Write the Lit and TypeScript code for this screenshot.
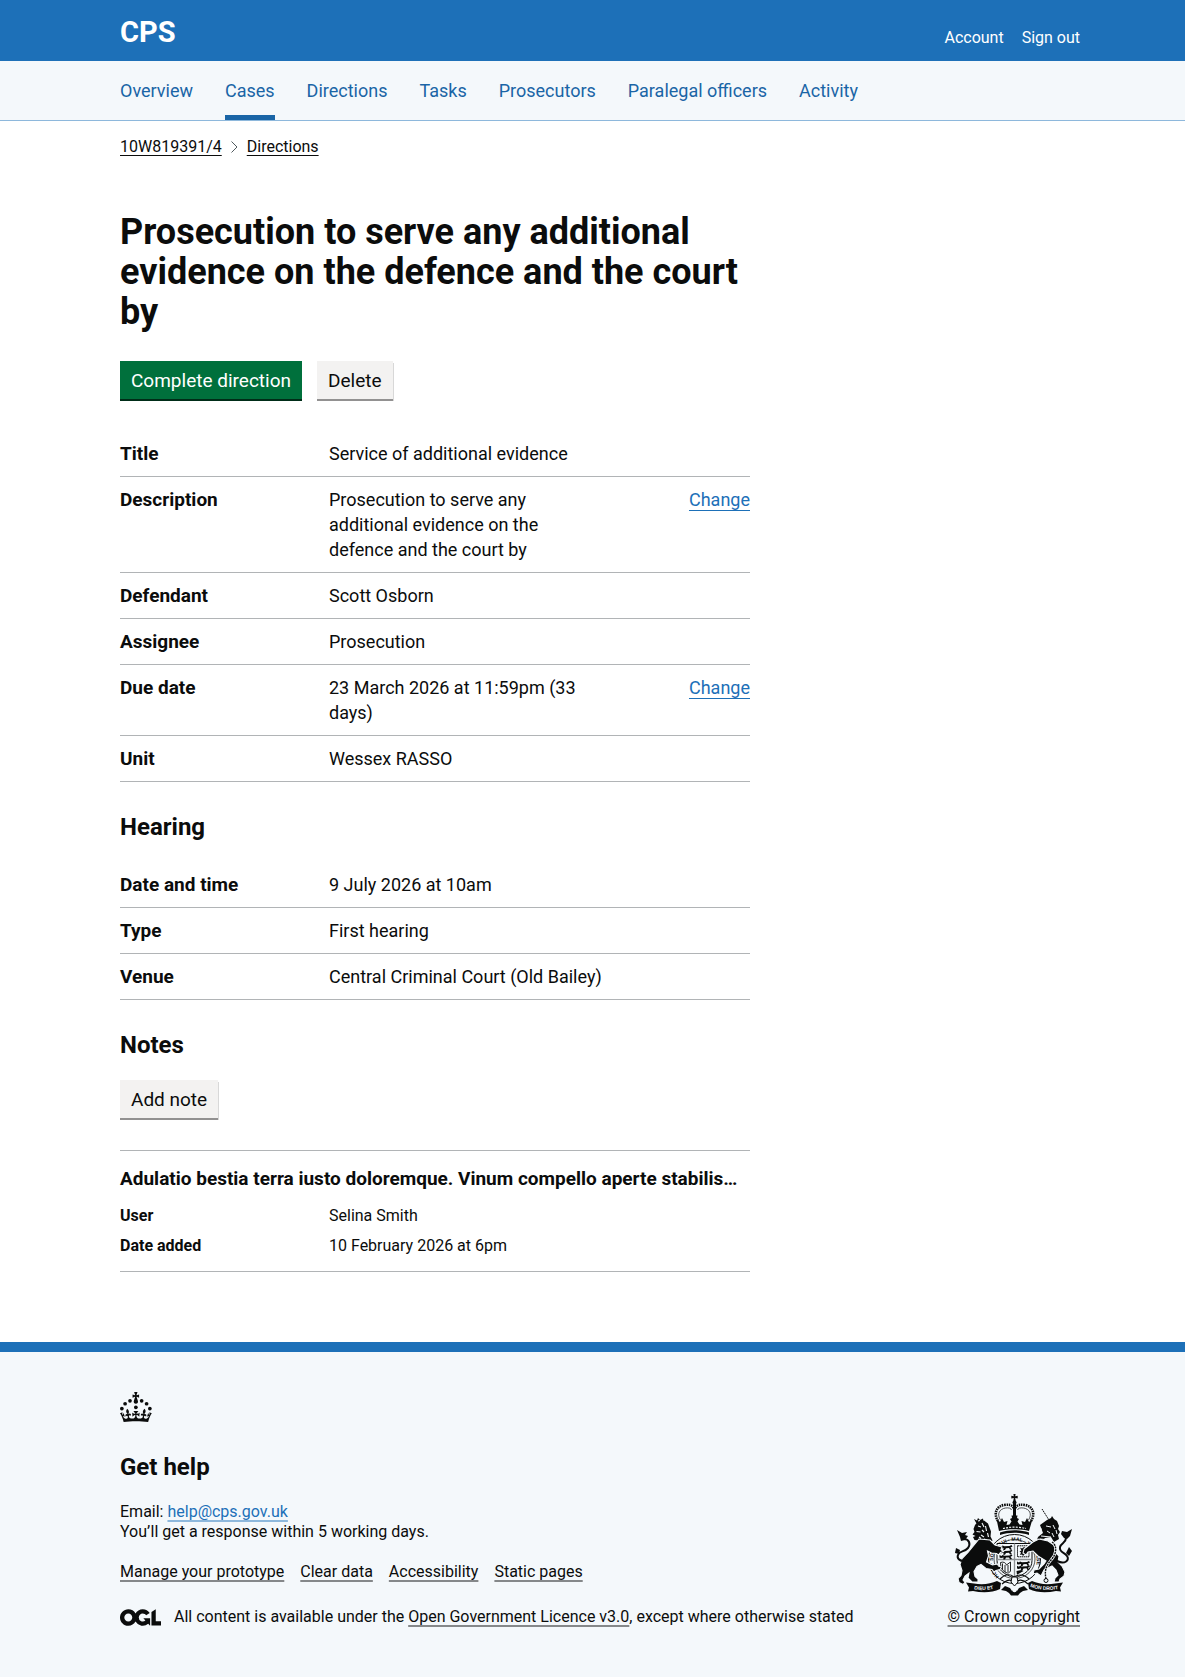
import { LitElement, html, css, svg, nothing } from 'lit';
import { customElement } from 'lit/decorators.js';
import { classMap } from 'lit/directives/class-map.js';

interface SummaryRow {
  key: string;
  value: string;
  change?: boolean;
}

const navigation = ['Overview', 'Cases', 'Directions', 'Tasks', 'Prosecutors', 'Paralegal officers', 'Activity'];

const direction: SummaryRow[] = [
  { key: 'Title', value: 'Service of additional evidence' },
  { key: 'Description', value: 'Prosecution to serve any additional evidence on the defence and the court by', change: true },
  { key: 'Defendant', value: 'Scott Osborn' },
  { key: 'Assignee', value: 'Prosecution' },
  { key: 'Due date', value: '23 March 2026 at 11:59pm (33 days)', change: true },
  { key: 'Unit', value: 'Wessex RASSO' },
];

const hearing: SummaryRow[] = [
  { key: 'Date and time', value: '9 July 2026 at 10am' },
  { key: 'Type', value: 'First hearing' },
  { key: 'Venue', value: 'Central Criminal Court (Old Bailey)' },
];

const footerLinks = ['Manage your prototype', 'Clear data', 'Accessibility', 'Static pages'];

const crown = html`<svg class="crown" viewBox="0 0 64 60" aria-hidden="true" fill="currentColor">
  <circle cx="20" cy="17.6" r="3.7" /><circle cx="10.2" cy="23.5" r="3.7" /><circle cx="3.7" cy="33.2" r="3.7" />
  <circle cx="31.7" cy="30.6" r="3.7" /><circle cx="43.3" cy="17.6" r="3.7" /><circle cx="53.2" cy="23.5" r="3.7" />
  <circle cx="59.7" cy="33.2" r="3.7" />
  <path d="M33.1,9.8c.2-.1.3-.3.5-.5l4.6,2.4v-6.8l-4.6,1.5c-.1-.2-.3-.3-.5-.5l1.9-5.9h-6.7l1.9,5.9c-.2.1-.3.3-.5.5l-4.6-1.5v6.8l4.6-2.4c.1.2.3.3.5.5l-2.6,8c-.9,2.8,1.2,5.7,4.1,5.7h0c3,0,5.1-2.9,4.1-5.7l-2.6-8ZM37,37.9s-3.4,3.8-4.1,6.1c2.2,0,4.2-.5,6.4-2.8l-.7,8.5c-2-2.8-4.4-4.1-5.7-3.8.1,3.1.5,6.7,5.8,7.2,3.7.3,6.7-1.5,7-3.8.4-2.6-2-4.3-3.7-1.6-1.4-4.5,2.4-6.1,4.9-3.2-1.9-4.5-1.8-7.7,2.4-10.9,3,4,2.6,7.3-1.2,11.1,2.4-1.3,6.2,0,4,4.6-1.2-2.8-3.7-2.2-4.2.2-.3,1.7.7,3.7,3,4.2,1.9.3,4.7-.9,7-5.9-1.3,0-2.4.7-3.9,1.7l2.4-8c.6,2.3,1.4,3.7,2.2,4.5.6-1.6.5-2.8,0-5.3l5,1.8c-2.6,3.6-5.2,8.7-7.3,17.5-7.4-1.1-15.7-1.7-24.5-1.7h0c-8.8,0-17.1.6-24.5,1.7-2.1-8.9-4.7-13.9-7.3-17.5l5-1.8c-.5,2.5-.6,3.7,0,5.3.8-.8,1.6-2.3,2.2-4.5l2.4,8c-1.5-1-2.6-1.7-3.9-1.7,2.3,5,5.2,6.2,7,5.9,2.3-.4,3.3-2.4,3-4.2-.5-2.4-3-3.1-4.2-.2-2.2-4.6,1.6-6,4-4.6-3.7-3.7-4.2-7.1-1.2-11.1,4.2,3.2,4.3,6.4,2.4,10.9,2.5-2.8,6.3-1.3,4.9,3.2-1.8-2.7-4.1-1-3.7,1.6.3,2.3,3.3,4.1,7,3.8,5.4-.5,5.7-4.2,5.8-7.2-1.3-.2-3.7,1-5.7,3.8l-.7-8.5c2.2,2.3,4.2,2.7,6.4,2.8-.7-2.3-4.1-6.1-4.1-6.1h10.6,0Z" />
</svg>`;

const licenceLogo = html`<svg class="ogl" viewBox="0 0 483.2 195.7" aria-hidden="true" fill="currentColor">
  <path d="M421.5 142.8V.1l-50.7 32.3v161.1h112.4v-50.7zm-122.3-9.6A47.12 47.12 0 0 1 221 97.8c0-26 21.1-47.1 47.1-47.1 16.7 0 31.4 8.7 39.7 21.8l42.7-27.2A97.63 97.63 0 0 0 268.1 0c-36.5 0-68.3 20.1-85.1 49.7A98 98 0 0 0 97.8 0C43.9 0 0 43.9 0 97.8s43.9 97.8 97.8 97.8c36.5 0 68.3-20.1 85.1-49.7a97.76 97.76 0 0 0 149.6 25.4l19.4 22.2h3v-87.8h-80l24.3 27.5zM97.8 145c-26 0-47.1-21.1-47.1-47.1s21.1-47.1 47.1-47.1 47.1 21.1 47.1 47.1S123.8 145 97.8 145" />
</svg>`;

// One passant lion of the shield, drawn from its top left corner.
const smallLion = (x: number, y: number) => svg`<path transform="translate(${x} ${y})"
  d="M0 0.5l2 1 1-1 2 .8 5-.3 2-1 1 1.4-2 1 1.5 2.2-2 .2-1-1.8-3 .2-1 1.8h-1.8l.4-2-2.6.6-1.5-.4z" />`;

const arms = html`<svg class="arms" viewBox="0 0 120 104" aria-hidden="true" fill="currentColor">
  <g>
    <path d="M59.4 1h2.2l-.4 2.3 2.5-.5v2.6l-2.5-.5.5 3.1h-2.4l.5-3.1-2.5.5V2.8l2.5.5z" />
    <circle cx="60.5" cy="9.6" r="2" />
    <path d="M59 11h3v15h-3z" />
    <path d="M44 28c-5-8-1-15 6-16 5-.8 8.500 0 9.500 3M77 28c5-8 1-15-6-16-5-.8-8.500 0-9.500 3" fill="none" stroke="currentColor" stroke-width="2.600" stroke-dasharray="1.500 .8" />
    <path d="M46.500 27c-4-6-1-11 5-12 3-.4 5.500 0 6 2M74.500 27c4-6 1-11-5-12-3-.4-5.500 0-6 2" fill="none" stroke="currentColor" stroke-width=".7" />
    <path d="M42.500 26l3.500 3 2-4 2 4 3.500-1-1 4 3-.5 2-3-1.500-2.500 2-1-.5-2.500h6l-.5 2.500 2 1-1.500 2.500 2 3 3 .5-1-4 3.500 1 2-4 2 4 3.500-3-3.500 12c-8-2.500-22-2.500-30 0z" />
    <path d="M46 39.500c9-3 20-3 29 0v2.500c-9-3-20-3-29 0z" />
    <path d="M49 35.500c7-1.800 16-1.800 23 0" fill="none" stroke="#f4f8fb" stroke-width="1.200" stroke-dasharray="2 1.200" />
  </g>

  <ellipse cx="60.500" cy="66" rx="26" ry="24.500" fill="#f4f8fb" stroke="currentColor" stroke-width="1" />
  <path id="garter" d="M45 83.500A22 21 0 1 1 77 83" fill="none" />
  <text class="motto"><textPath href="#garter">HONI · SOIT · QUI · MAL · Y · PENSE</textPath></text>
  <ellipse cx="60.500" cy="66" rx="20.500" ry="19.500" fill="none" stroke="currentColor" stroke-width=".7" />

  <path d="M43 50.500h35v17c0 9-7 14-17.500 17.500C50 81.500 43 76.500 43 67.500z" fill="#f4f8fb" stroke="currentColor" stroke-width="1" />
  <path d="M60.500 50.500v34M43 66.500h35" stroke="#8d9193" stroke-width="1.300" />
  <g>${smallLion(45.500, 52)}${smallLion(45.500, 56.700)}${smallLion(45.500, 61.400)}</g>
  <rect x="63.500" y="52.800" width="11.500" height="11" fill="none" stroke="currentColor" stroke-width="1" stroke-dasharray="1.500 .5" />
  <path d="M66 54.500l2 1 2-1.500 2.500 1.500-1.500 2 2.500.5-1.500 2 .5 2.500-2-1-1.500 1.500-1-1.500-2 .5 1-2.500-1.500-1 2-1z" />
  <path d="M46.500 69.500c3-1 5 0 6 2.500l4-3v9c-1 2-3 2.500-4.500 1.500-2.500-1-4-3-5-5zM48.500 70.500v6M51 72v7M54 72v7" fill="none" stroke="currentColor" stroke-width=".9" />
  <g>${smallLion(63, 68)}${smallLion(63, 72.300)}</g>
  <path d="M62.500 78l5-1 2 1-6.500 3.800z" />

  <g>
    <path d="M20 26l3 1.500 1-2.500 2 2 3-1.500.5 3.500-7 1.500z" />
    <path d="M21 32l3-3.500 6-1 4 3 1.500 4 1.500 4-.5 5 2 4-3 4-7-1-4-3-4-.5-1.500-3 2.500-1-3-1.500 2-2.500-1-3z" />
    <path d="M24 33l3 1M22.500 38.500l4 .5M28 30l2 4M31.500 33l1 5M27 42l3 2M33.500 40l1 4M28 37l2 2M30 46l3 1M24 28l2-.5M25 44l2 1.500" stroke="#f4f8fb" stroke-width="1.100" />
    <g stroke="#f4f8fb" stroke-width="1.100">
      <path d="M25 46l11 1 5 5 7 2-1 2.500 2.500 2-3 1-2 2.500-2-1.500-5-.5-4-2 1 5-2 6 6 3 5-1 1 2 3 1-1.500 2.500-4 1-2 1.500-2-2.500-6-1-5-4-4 2-3 5 1 5 3 2.500v3h-6l-4-4 1-5-4 3-2 4 2 2.500-2 2-4-2-1-4 3-3 1-5-2-6 2-6 6-6z" />
    </g>
    <path d="M14 67c-8 3-12-2-9.500-6 1.500-3 6-2 9.500-6 3-4 1-9-4-9" fill="none" stroke="currentColor" stroke-width="2" stroke-linecap="round" />
    <path d="M3 37l5 3 5-1-2 3 3 1-3 4-4 1-1-4z" />
    <path d="M2 55l4 2-1 4-4-1z" />
  </g>

  <g>
    <path d="M88 16l7 11" fill="none" stroke="currentColor" stroke-width="1" stroke-dasharray="1.600 .6" />
    <path d="M86 32l7-5 4-2 1-2 2 3 3 2 2 5-1 3 2 3-2 3 1 4-5 3-3-5-6 1-3 3-5-1 1-3 5-4z" />
    <path d="M87 43l10 1M92 33l5 1M99 32l2 4M98 40l2 4M84 37l4-1M86 46l11 1M93 38l3 2M102 37l1 4" stroke="#f4f8fb" stroke-width="1" />
    <g stroke="#f4f8fb" stroke-width="1.100">
      <path d="M79 49l6-3 9 2 6 4 2 8 3 3-1 6 4 4 3 6-1 4-4 3-1 3h-5l1-4 3-3-2-5-4-4-8 4-3 6-4-3-4 1 1-4 5-1 5-5 2-3-8-5-5-5-5 1-2 3-3-2 1-4z" />
    </g>
    <path d="M103 68c8 4 13-1 10-5-2-4-8-3-7-9 1-4 6-4 6-9" fill="none" stroke="currentColor" stroke-width="2" stroke-linecap="round" />
    <path d="M118 36l-5 3-5-1-1 3 3 4 3 1 3-3z" />
    <path d="M115 54l3 4-3 5-3-3z" />
    <path d="M98 49c6 4 4 13-1 18-4 5-7 9-5 19" fill="none" stroke="#f4f8fb" stroke-width="2.800" />
    <path d="M98 49c6 4 4 13-1 18-4 5-7 9-5 19" fill="none" stroke="currentColor" stroke-width="1.400" stroke-dasharray="2 .8" />
    <circle cx="92" cy="87.500" r="2" fill="none" stroke="currentColor" stroke-width="1" />
  </g>

  <path d="M46 86c5-5 9-6 14-2 5-3 10-3 15 2M48 91c6-5 10-5 13-1 3-4 8-4 13 1" fill="none" stroke="currentColor" stroke-width="1.100" />
  <path d="M58 84h5l1 5-3.500 4-3.500-4z" fill="#f4f8fb" stroke="currentColor" stroke-width="1" />
  <path d="M12 89.500l8 1c9 2 17 0 23-2.500l4 2-1 6c-8 4-18 4-27 2l-5 .5 1-4z" />
  <path d="M109 89.500l-8 1c-9 2-17 0-23-2.500l-4 2 1 6c8 4 18 4 27 2l5 .5-1-4z" />
  <path id="scroll-left" d="M20 96.200c8 1.600 17 1 25-2.200" fill="none" />
  <path id="scroll-right" d="M76 93.800c8 3.200 17 4 28 2.200" fill="none" />
  <text class="scroll"><textPath href="#scroll-left">DIEU ET</textPath></text>
  <text class="scroll"><textPath href="#scroll-right">MON DROIT</textPath></text>
  <path d="M47 97l4-4 5 2 2 3 2.500-2 2.500 2 2-3 5-2 4 4-5 1-3 2-2 2.500h-7l-2-2.500-3-2z" />
  <circle cx="60.500" cy="97" r="2.200" fill="#f4f8fb" />
</svg>`;

@customElement('app-root')
export class AppRoot extends LitElement {
  static styles = css`
    :host {
      display: block;
      font-family: Roboto, 'Liberation Sans', Arial, sans-serif;
      font-size: 18px;
      line-height: 25px;
      color: #0b0c0c;
      background: #ffffff;
    }
    * {
      box-sizing: border-box;
    }
    h1, h2, h3, p, ul, ol, dl, dd {
      margin: 0;
      padding: 0;
    }
    ul, ol {
      list-style: none;
    }
    svg {
      display: block;
      flex: none;
    }
    .band {
      padding: 0 0 0 15px;
    }
    .container {
      max-width: 960px;
      margin: 0 auto;
    }
    .header {
      background: #1d70b8;
      color: #ffffff;
    }
    .header-row {
      display: flex;
      align-items: center;
      justify-content: space-between;
      min-height: 61px;
    }
    .header a {
      color: inherit;
      text-decoration: none;
    }
    .brand {
      padding-top: 2px;
      font-size: 29px;
      line-height: 30px;
      font-weight: 700;
    }
    .account {
      display: flex;
      gap: 18px;
      padding-top: 15px;
      font-size: 16px;
      line-height: 20px;
    }
    .nav {
      background: #f4f8fb;
      border-bottom: 1px solid #8eb8dc;
    }
    .nav-list {
      display: flex;
      flex-wrap: wrap;
      gap: 0 32px;
    }
    .nav-link {
      display: block;
      padding: 17px 0 12px;
      border-bottom: 5px solid transparent;
      color: #1a65a6;
      text-decoration: none;
    }
    .nav-link.current {
      border-bottom-color: #1a65a6;
    }
    .breadcrumbs {
      display: flex;
      align-items: center;
      gap: 9px;
      padding-top: 16px;
      font-size: 16px;
      line-height: 20px;
    }
    .breadcrumbs li {
      display: flex;
      align-items: center;
      gap: 9px;
    }
    .breadcrumbs a {
      color: inherit;
      text-decoration: underline 1px;
      text-underline-offset: 3px;
    }
    .chevron {
      width: 7px;
      height: 12px;
    }
    .main {
      padding: 55px 0 70px;
    }
    .column {
      max-width: 630px;
    }
    h1 {
      font-size: 36px;
      line-height: 40px;
      font-weight: 700;
    }
    h2 {
      font-size: 24px;
      line-height: 30px;
      font-weight: 700;
    }
    .buttons {
      display: flex;
      gap: 15px;
      margin: 29px 0 32px;
    }
    .button {
      height: 38px;
      padding: 1px 11px 0;
      border: 0;
      font: inherit;
      font-size: 19px;
      line-height: 37px;
      color: #ffffff;
      background: #00703c;
      box-shadow: 0 2px 0 #002d18;
      cursor: pointer;
    }
    .button.secondary {
      color: #0b0c0c;
      background: #f3f2f1;
      box-shadow: 0 2px 0 #929191, 1px 2px 0 #d8d8d8;
    }
    .summary {
      margin-bottom: 30px;
    }
    .summary-row {
      display: grid;
      grid-template-columns: calc(30% + 20px) 1fr 20%;
      padding: 10px 0;
      border-bottom: 1px solid #b1b4b6;
    }
    .summary-row dt {
      font-size: 19px;
      font-weight: 700;
    }
    .summary-row dd {
      padding-right: 30px;
    }
    .summary-row .wide {
      grid-column: span 2;
    }
    .summary-row .action {
      padding: 0;
      text-align: right;
    }
    .link {
      color: #1d70b8;
      text-decoration: underline 1px;
      text-underline-offset: 4px;
    }
    .hearing {
      margin-top: 20px;
    }
    .notes-action {
      display: flex;
      margin: 20px 0 32px;
    }
    .note {
      padding: 15px 0;
      border: solid #b1b4b6;
      border-width: 1px 0;
    }
    .note h3 {
      margin-bottom: 15px;
      font-size: 19px;
      font-weight: 700;
    }
    .note dl {
      display: grid;
      gap: 10px;
      font-size: 16px;
      line-height: 20px;
    }
    .note-row {
      display: grid;
      grid-template-columns: calc(30% + 20px) 1fr;
    }
    .note dt {
      font-weight: 700;
    }
    .footer {
      border-top: 10px solid #1d70b8;
      padding-top: 40px;
      padding-bottom: 50px;
      background: #f4f8fb;
      font-size: 16px;
      line-height: 20px;
    }
    .crown {
      width: 32px;
      height: 30px;
      margin-bottom: 30px;
    }
    .footer-row {
      display: flex;
      align-items: flex-end;
      justify-content: space-between;
      gap: 30px;
    }
    .footer h2 {
      margin-bottom: 20px;
    }
    .footer a {
      color: inherit;
      text-decoration: underline 2px #85888a;
      text-underline-offset: 3px;
      text-decoration-skip-ink: none;
    }
    .footer a.email {
      color: #1d70b8;
      text-decoration-color: #8eb8dc;
    }
    .footer-links {
      display: flex;
      flex-wrap: wrap;
      gap: 0 16px;
      margin: 20px 0 25px;
    }
    .licence {
      display: flex;
      align-items: center;
      gap: 13px;
    }
    .ogl {
      width: 41px;
      height: 17px;
    }
    .footer a.copyright {
      display: flex;
      flex-direction: column;
      align-items: center;
      gap: 10px;
      white-space: nowrap;
    }
    .arms {
      width: 120px;
      height: 104px;
    }
    .motto {
      font: 700 5px 'Liberation Sans', sans-serif;
    }
    .scroll {
      font: 700 5px 'Liberation Sans', sans-serif;
      fill: #f4f8fb;
    }
  `;

  private summary(rows: SummaryRow[]) {
    return html`<dl class="summary">
      ${rows.map(
        (row) => html`<div class="summary-row">
          <dt>${row.key}</dt>
          <dd class=${classMap({ wide: !row.change })}>${row.value}</dd>
          ${row.change
            ? html`<dd class="action"><a class="link" href="#" aria-label="Change ${row.key.toLowerCase()}">Change</a></dd>`
            : nothing}
        </div>`,
      )}
    </dl>`;
  }

  render() {
    return html`
      <header class="header band">
        <div class="container header-row">
          <a class="brand" href="#">CPS</a>
          <div class="account"><a href="#">Account</a><a href="#">Sign out</a></div>
        </div>
      </header>
      <nav class="nav band">
        <ul class="container nav-list">
          ${navigation.map(
            (item) => html`<li><a href="#" class=${classMap({ 'nav-link': true, current: item === 'Cases' })}>${item}</a></li>`,
          )}
        </ul>
      </nav>
      <div class="band">
        <div class="container">
          <ol class="breadcrumbs">
            <li><a href="#">10W819391/4</a></li>
            <li>
              <svg class="chevron" viewBox="0 0 7 12" aria-hidden="true" fill="none" stroke="#505a5f">
                <path d="M.5.5L6 6 .5 11.500" />
              </svg>
              <a href="#">Directions</a>
            </li>
          </ol>
          <main class="main">
            <div class="column">
              <h1>Prosecution to serve any additional evidence on the defence and the court by</h1>
              <div class="buttons">
                <button class="button" type="button">Complete direction</button>
                <button class="button secondary" type="button">Delete</button>
              </div>
              ${this.summary(direction)}
              <h2>Hearing</h2>
              <div class="hearing">${this.summary(hearing)}</div>
              <h2>Notes</h2>
              <div class="notes-action"><button class="button secondary" type="button">Add note</button></div>
              <article class="note">
                <h3>Adulatio bestia terra iusto doloremque. Vinum compello aperte stabilis…</h3>
                <dl>
                  <div class="note-row"><dt>User</dt><dd>Selina Smith</dd></div>
                  <div class="note-row"><dt>Date added</dt><dd>10 February 2026 at 6pm</dd></div>
                </dl>
              </article>
            </div>
          </main>
        </div>
      </div>
      <footer class="footer band">
        <div class="container">
          ${crown}
          <div class="footer-row">
            <div>
              <h2>Get help</h2>
              <p>Email: <a class="email" href="mailto:help@cps.gov.uk">help@cps.gov.uk</a></p>
              <p>You’ll get a response within 5 working days.</p>
              <ul class="footer-links">
                ${footerLinks.map((item) => html`<li><a href="#">${item}</a></li>`)}
              </ul>
              <div class="licence">
                ${licenceLogo}
                <p>All content is available under the <a href="#">Open Government Licence v3.0</a>, except where otherwise stated</p>
              </div>
            </div>
            <a class="copyright" href="#">${arms}<span>© Crown copyright</span></a>
          </div>
        </div>
      </footer>
    `;
  }
}
